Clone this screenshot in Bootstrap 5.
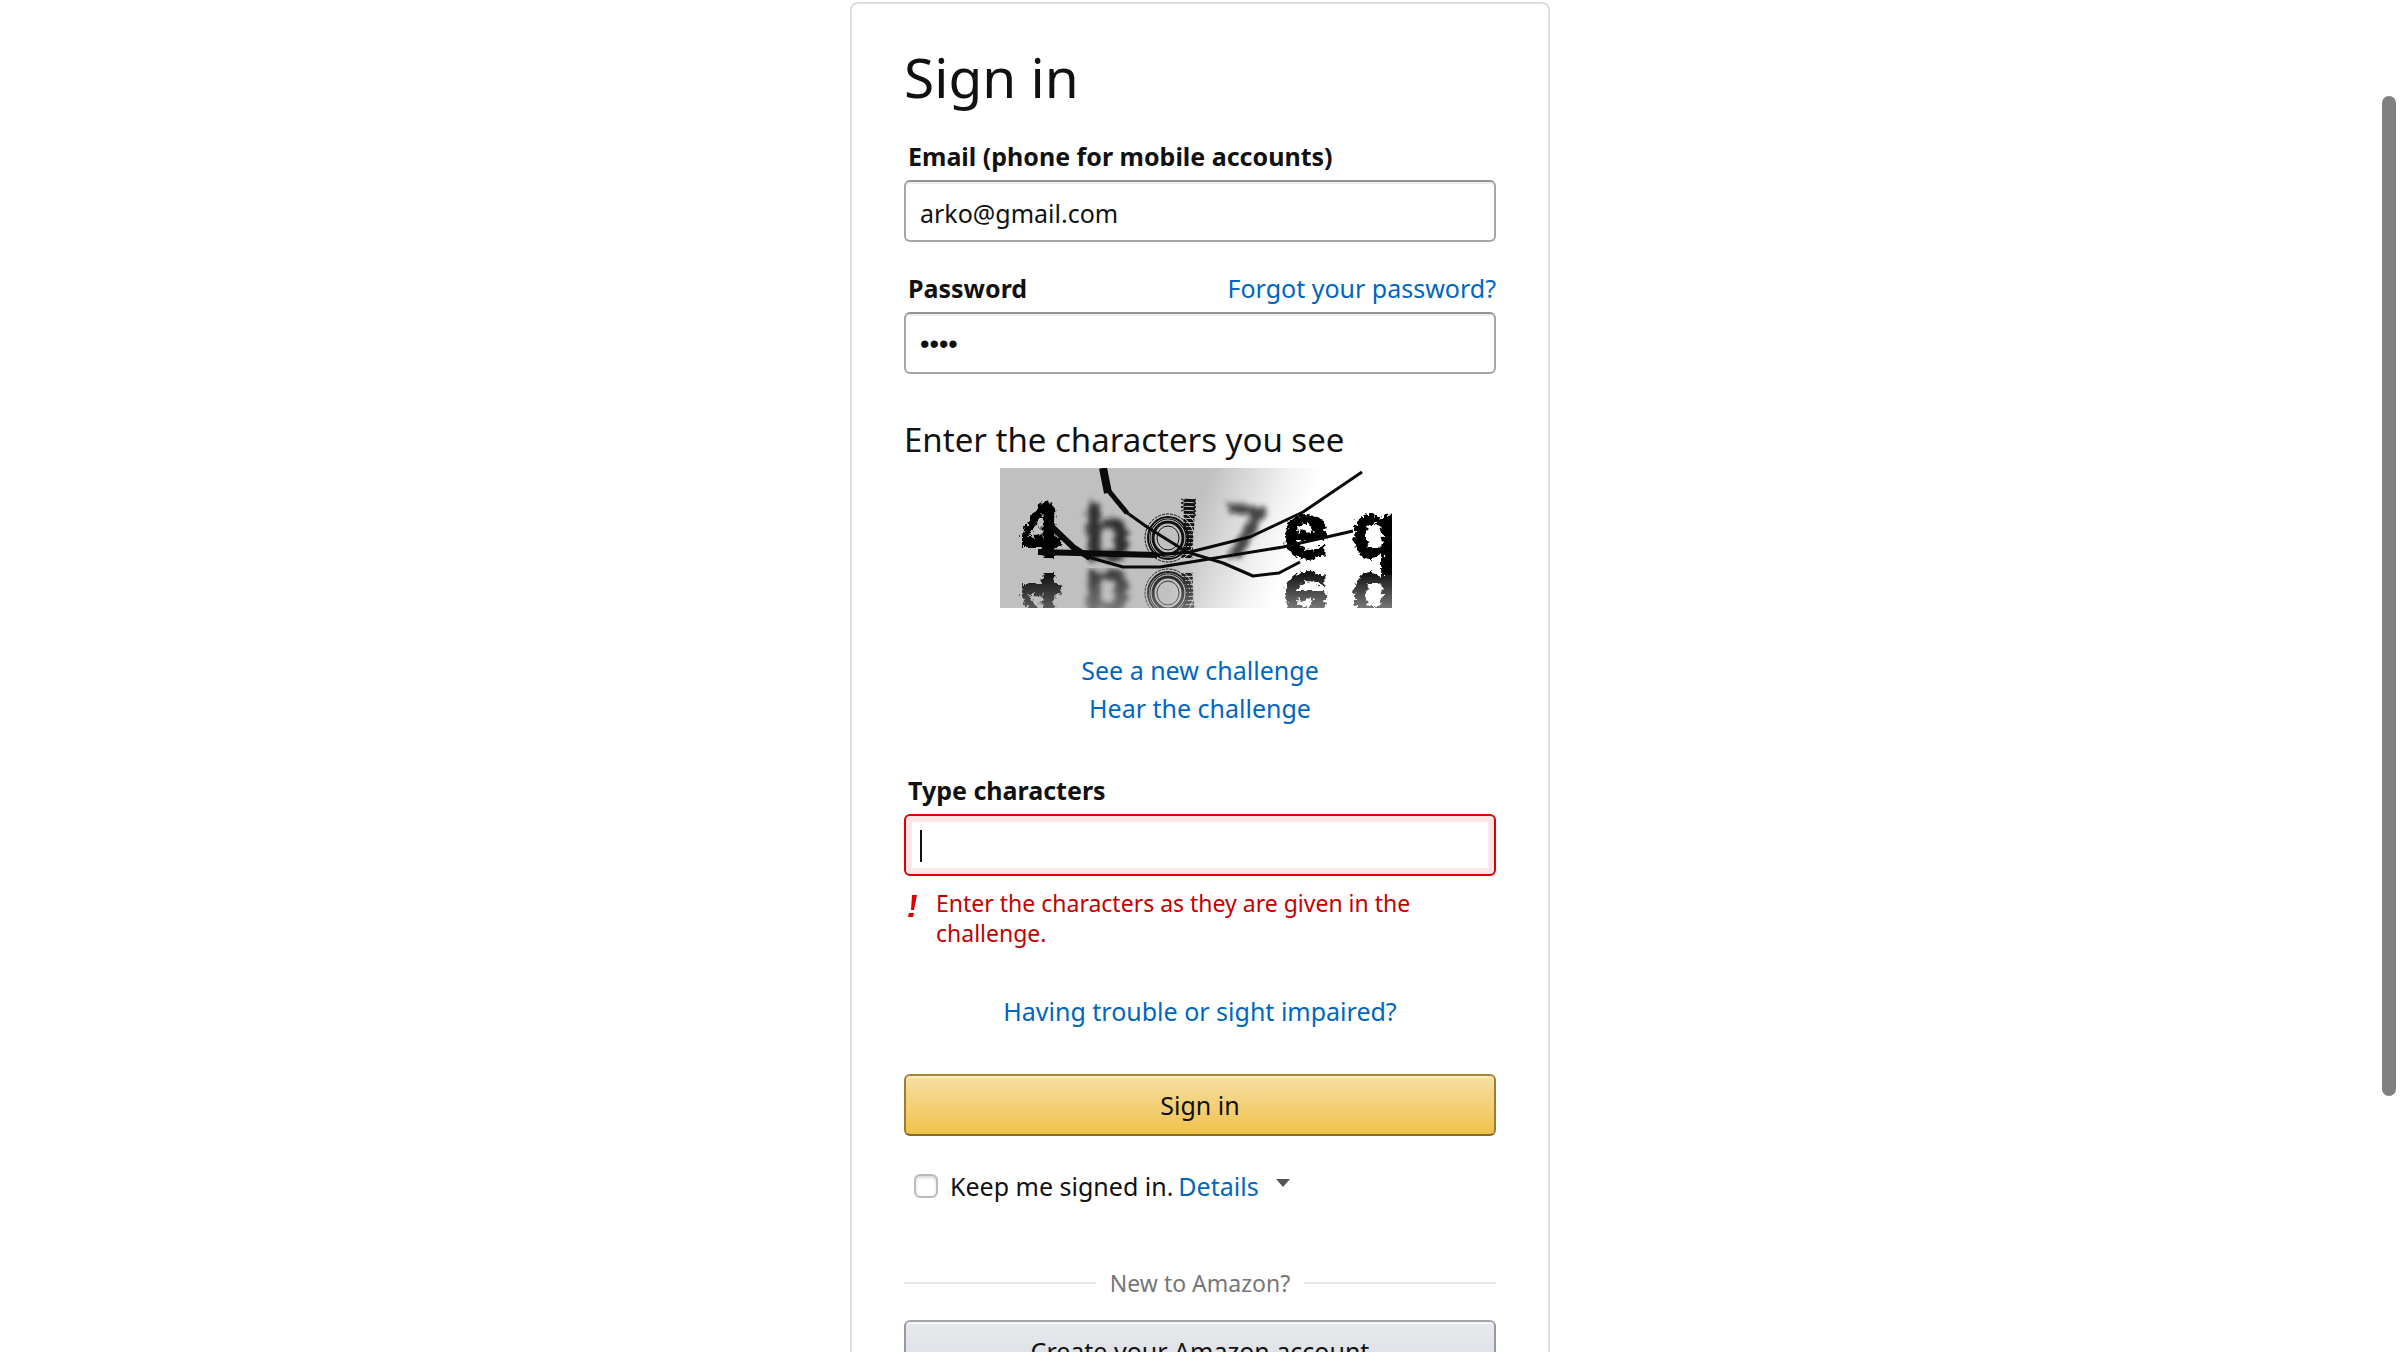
<!DOCTYPE html>
<html lang="en">
<head>
<meta charset="utf-8">
<meta name="viewport" content="width=device-width, initial-scale=1">
<title>Amazon Sign In</title>
<link href="https://cdn.jsdelivr.net/npm/bootstrap@5.3.0/dist/css/bootstrap.min.css" rel="stylesheet">
<style>
body{font-family:"Noto Sans","Open Sans",sans-serif;font-size:25px;line-height:38px;color:#111}
a{color:#0066c0;text-decoration:none}
.signin-page{padding:2px 0 0}
.signin-box{max-width:700px;border:2px solid #ddd;border-radius:8px;padding:37px 52px 52px}
.signin-title{font-size:55px;line-height:72px;font-weight:400;margin-bottom:24px}
.signin-label{font-weight:700;padding-left:4px;margin-bottom:5px}
.signin-input{height:62px;font-size:25px;line-height:38px;color:#111;padding:3px 14px 0;border:2px solid #a6a6a6;border-top-color:#949494;border-radius:6px;box-shadow:inset 0 2px 0 rgba(0,0,0,.07)}
.signin-input[type=password]{font-family:"Liberation Sans",sans-serif;font-size:27px}
.signin-input.has-error{border-color:#d00;box-shadow:inset 0 0 0 6px #fde6e6;caret-color:transparent}
.group-gap{margin-top:27px}
.section-gap{margin-top:44px}
.captcha-title{font-size:33px;line-height:44px;font-weight:400;margin-bottom:6px}
.captcha-art{width:400px;height:140px}
.text-cursor{position:absolute;left:16px;top:16px;width:2px;height:32px;background:#111}
.error-row{font-size:23px;line-height:30px;color:#c40000;margin-top:12px;padding-left:4px;gap:18px}
.error-icon{width:10px;height:22px;margin-top:7px}
.signin-btn{height:62px;font-size:25px;line-height:38px;color:#111;border-radius:6px;padding:0}
.btn-gold{margin-top:44px;border:2px solid;border-color:#a88734 #9c7e31 #846a29;background:linear-gradient(#f7dfa5,#f0c14b);box-shadow:inset 0 2px 0 rgba(255,255,255,.4)}
.btn-gray{margin-top:22px;border:2px solid;border-color:#a2a6ac #979aa1 #82858a;background:linear-gradient(#e7e9ec,#d8dce2);box-shadow:inset 0 2px 0 rgba(255,255,255,.6)}
.keep-row{margin-top:31px;padding-left:10px}
.keep-box{width:24px;height:24px;margin:0 12px 0 0;border:2px solid #bbb;border-radius:6px;box-shadow:inset 0 2px 3px rgba(0,0,0,.15)}
.keep-text{margin-right:5px}
.details-arrow{width:14px;height:8px;margin:0 0 6px 17px}
.divider-row{margin-top:63px;font-size:23px;line-height:30px;color:#767676;gap:14px}
.divider-row .rule{height:2px;background:#e7e7e7}
.scroll-thumb{position:fixed;right:4px;top:96px;bottom:256px;width:14px;border-radius:7px;background:#808080}
.captcha-chars{font-family:"DejaVu Sans Condensed","DejaVu Sans",sans-serif;font-weight:700}
</style>
<script src="https://cdn.jsdelivr.net/npm/bootstrap@5.3.0/dist/js/bootstrap.bundle.min.js"></script>
</head>
<body class="vh-100 overflow-hidden bg-white">
<main class="container-fluid signin-page">
<form class="signin-box mx-auto" id="signin">
  <h1 class="signin-title">Sign in</h1>

  <label class="signin-label d-block" for="email">Email (phone for mobile accounts)</label>
  <input class="form-control signin-input" id="email" type="email" value="arko@gmail.com">

  <div class="d-flex justify-content-between group-gap">
    <label class="signin-label" for="password">Password</label>
    <a href="#">Forgot your password?</a>
  </div>
  <input class="form-control signin-input" id="password" type="password" value="1234">

  <h2 class="captcha-title section-gap">Enter the characters you see</h2>
  <svg class="captcha-art d-block mx-auto" viewBox="0 0 400 140" role="img" aria-label="Challenge characters">
    <defs>
      <linearGradient id="shade" gradientUnits="userSpaceOnUse" x1="212" y1="0" x2="310" y2="36">
        <stop offset="0" stop-color="#c0c0c0"/><stop offset=".35" stop-color="#d9d9d9"/><stop offset=".7" stop-color="#f1f1f1"/><stop offset="1" stop-color="#fff"/>
      </linearGradient>
      <filter id="rough" x="-10%" y="-10%" width="120%" height="120%">
        <feTurbulence type="turbulence" baseFrequency=".14" numOctaves="2" seed="4"/>
        <feDisplacementMap in="SourceGraphic" scale="8" xChannelSelector="R" yChannelSelector="G"/>
        <feGaussianBlur stdDeviation=".7"/>
      </filter>
      <filter id="smear" x="-20%" y="-20%" width="140%" height="140%">
        <feTurbulence type="turbulence" baseFrequency=".16" numOctaves="2" seed="9"/>
        <feDisplacementMap in="SourceGraphic" scale="9" xChannelSelector="R" yChannelSelector="G"/>
        <feGaussianBlur stdDeviation="2.4"/>
      </filter>
      <clipPath id="upper"><rect width="392" height="108"/></clipPath>
      <clipPath id="lower"><rect y="100" width="392" height="40"/></clipPath>
      <linearGradient id="fadeFill" x1="0" y1="0" x2="0" y2="1"><stop offset="0" stop-color="#fff"/><stop offset="1" stop-color="#888"/></linearGradient>
      <mask id="fade" maskUnits="userSpaceOnUse" x="0" y="98" width="400" height="42"><rect y="98" width="400" height="42" fill="url(#fadeFill)"/></mask>
      <g id="chars" class="captcha-chars">
        <g filter="url(#rough)">
          <text x="16" y="87" font-size="74">4</text>
          <text x="280" y="88" font-size="78">e</text>
          <text x="349" y="88" font-size="78">q</text>
        </g>
        <g filter="url(#smear)">
          <text x="80" y="90" font-size="76" fill="#1a1a1a" opacity=".85">b</text>
        </g>
        <g fill="none" stroke="#111">
          <path d="M190 31L187 90" stroke-width="11" stroke-dasharray="3 1"/>
          <path d="M181 31l5 2-5 2 5 2-5 2 5 2-5 2M196 31l-4 2 4 2-4 2 4 2-4 2 4 2-4 2 4 2-4 2" stroke-width="1"/>
          <ellipse cx="168" cy="70" rx="16" ry="17" stroke-width="5"/>
          <ellipse cx="168" cy="70" rx="11" ry="12" stroke-width="1"/>
          <ellipse cx="168" cy="70" rx="17" ry="18" stroke="#ddd" stroke-width="1"/>
          <ellipse cx="168" cy="70" rx="20" ry="21" stroke-width="2"/>
          <ellipse cx="168" cy="70" rx="23" ry="24" stroke-width="1" stroke-dasharray="3 1"/>
          <path d="M181 48a25 25 0 0 1 0 44M186 46a28 28 0 0 1 0 48" stroke="#ccc" stroke-width="1"/>
        </g>
      </g>
    </defs>
    <rect width="392" height="140" fill="url(#shade)"/>
    <g clip-path="url(#upper)"><use href="#chars"/></g>
    <g class="captcha-chars" filter="url(#smear)">
      <text x="219" y="88" font-size="74" fill="#111" opacity=".75" transform="rotate(8 238 60)">7</text>
    </g>
    <g clip-path="url(#lower)" mask="url(#fade)"><use href="#chars" transform="translate(0 195) scale(1 -1)"/></g>
    <g fill="none" stroke="#0a0a0a" stroke-linejoin="round">
      <path d="M103 0l5 25" stroke-width="8"/><path d="M108 22l19 23" stroke-width="5"/>
      <path d="M126 44l21 15 40 25 36 11 30 13 26-3 21-11" stroke-width="3"/>
      <path d="M50 57l23 22 17 11" stroke-width="6"/>
      <path d="M88 89l35 10h37l43-7 80-13 70-16" stroke-width="3"/>
      <path d="M38 84l119 3" stroke-width="6"/><path d="M157 87l33-3 60-15 53-25 59-40" stroke-width="3"/>
    </g>
  </svg>

  <div class="text-center group-gap pt-3">
    <a class="d-block" href="#">See a new challenge</a>
    <a class="d-block" href="#">Hear the challenge</a>
  </div>

  <label class="signin-label d-block section-gap" for="guess">Type characters</label>
  <div class="position-relative">
    <input class="form-control signin-input has-error" id="guess" type="text" aria-describedby="guess-error">
    <span class="text-cursor"></span>
  </div>
  <div class="error-row d-flex align-items-start" id="guess-error">
    <svg class="error-icon flex-shrink-0" viewBox="0 0 10 22" fill="#d00" aria-hidden="true"><path d="M4 0h5L6 15H3zM1 18h5l-1 4H0z"/></svg>
    <span>Enter the characters as they are given in the challenge.</span>
  </div>

  <div class="text-center section-gap"><a href="#">Having trouble or sight impaired?</a></div>

  <button class="btn signin-btn btn-gold w-100 d-block" type="submit">Sign in</button>

  <div class="keep-row d-flex align-items-center">
    <input class="form-check-input keep-box" id="keep" type="checkbox">
    <label class="keep-text" for="keep">Keep me signed in.</label>
    <a class="d-flex align-items-center" href="#">Details
      <svg class="details-arrow" viewBox="0 0 14 8" aria-hidden="true"><path d="M0 0h14L7 8z" fill="#555"/></svg>
    </a>
  </div>

  <div class="divider-row d-flex align-items-center">
    <span class="rule flex-grow-1"></span><span>New to Amazon?</span><span class="rule flex-grow-1"></span>
  </div>
  <button class="btn signin-btn btn-gray w-100 d-block" type="button">Create your Amazon account</button>
</form>
</main>
<div class="scroll-thumb"></div>
</body>
</html>
